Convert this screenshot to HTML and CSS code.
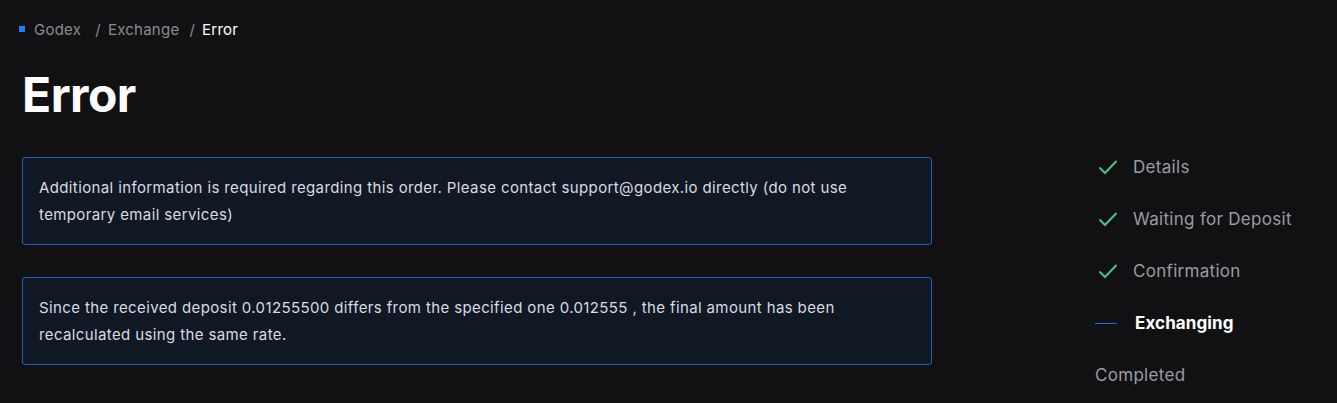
FILE: index.html
```html
<!DOCTYPE html>
<html lang="en">
<head>
<meta charset="utf-8">
<title>Error</title>
<link rel="stylesheet" href="styles.css">
</head>
<body>
<div class="page">
  <nav class="crumbs">
    <span class="crumb-dot"></span>
    <span class="crumb first">Godex</span>
    <span class="sep">/</span>
    <span class="crumb">Exchange</span>
    <span class="sep">/</span>
    <span class="crumb current">Error</span>
  </nav>
  <h1 class="title">Error</h1>
  <div class="layout">
    <main class="main">
      <div class="notice">Additional information is required regarding this order. Please contact support@godex.io directly (do not use temporary email services)</div>
      <div class="notice">Since the received deposit 0.01255500 differs from the specified one 0.012555 , the final amount has been recalculated using the same rate.</div>
    </main>
    <aside class="steps">
      <div class="step done"><svg class="check" viewBox="0 0 20 16" width="20" height="16"><path d="M1.5 8.5 L7 14 L18.5 2" fill="none" stroke="currentColor" stroke-width="2"/></svg><span>Details</span></div>
      <div class="step done"><svg class="check" viewBox="0 0 20 16" width="20" height="16"><path d="M1.5 8.5 L7 14 L18.5 2" fill="none" stroke="currentColor" stroke-width="2"/></svg><span>Waiting for Deposit</span></div>
      <div class="step done"><svg class="check" viewBox="0 0 20 16" width="20" height="16"><path d="M1.5 8.5 L7 14 L18.5 2" fill="none" stroke="currentColor" stroke-width="2"/></svg><span>Confirmation</span></div>
      <div class="step active"><span class="dash"></span><span>Exchanging</span></div>
      <div class="step todo"><span>Completed</span></div>
    </aside>
  </div>
</div>
</body>
</html>
```
FILE: styles.css
```css
* { box-sizing: border-box; }
html, body { margin: 0; background: #111113; }
body {
  font-family: Inter, "Noto Sans", sans-serif;
  color: #e4e5e8;
  width: 1337px;
  height: 403px;
  overflow: hidden;
}
.page { padding: 18px 0 0 19px; }
.crumbs {
  display: flex;
  align-items: center;
  height: 22px;
  font-size: 15px;
  letter-spacing: 0.25px;
  color: #8b8b90;
}
.crumb-dot {
  width: 6px; height: 6px;
  background: #1a7ff5;
  margin-right: 9px;
}
.crumb.first { margin-right: 4px; }
.sep { margin: 0 7px 0 10px; }
.current { color: #ffffff; }
.title {
  margin: 25px 0 0 3px;
  font-size: 48px;
  line-height: 60px;
  font-weight: 700;
  color: #ffffff;
  letter-spacing: -0.5px;
}
.layout {
  display: grid;
  grid-template-columns: 910px 1fr;
  column-gap: 163px;
  margin-top: 32px;
  margin-left: 3px;
}
.main { display: flex; flex-direction: column; gap: 32px; }
.notice {
  border: 1px solid #1f5fbd;
  border-radius: 3px;
  background: #101824;
  padding: 16px 16px;
  font-size: 15px;
  line-height: 27px;
  letter-spacing: 0.38px;
  color: #d9dbe0;
  min-height: 88px;
}
.steps { display: flex; flex-direction: column; gap: 32px; }
.step {
  display: flex;
  align-items: center;
  height: 20px;
  font-size: 17px;
  letter-spacing: 0.3px;
  color: #9a9ca2;
}
.check { color: #4cc47c; margin: 0 15px 0 3px; flex: none; }
.step.active { color: #ffffff; font-weight: 700; letter-spacing: 0.1px; }
.dash {
  width: 22px; height: 1px;
  background: #1a6fe8;
  margin-right: 18px;
}
```
